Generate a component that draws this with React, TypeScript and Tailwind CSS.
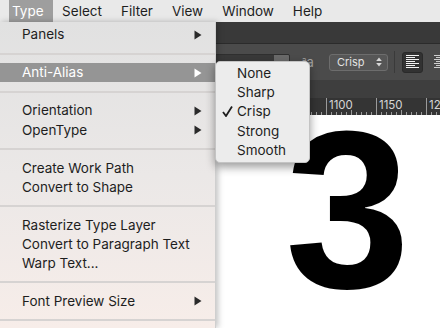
import React from "react";

type Entry = { label: string; arrow?: boolean; active?: boolean } | "sep";

const typeMenu: Entry[] = [
  { label: "Panels", arrow: true },
  "sep",
  { label: "Anti-Alias", arrow: true, active: true },
  "sep",
  { label: "Orientation", arrow: true },
  { label: "OpenType", arrow: true },
  "sep",
  { label: "Create Work Path" },
  { label: "Convert to Shape" },
  "sep",
  { label: "Rasterize Type Layer" },
  { label: "Convert to Paragraph Text" },
  { label: "Warp Text..." },
  "sep",
  { label: "Font Preview Size", arrow: true },
  "sep",
];

const aliasModes = ["None", "Sharp", "Crisp", "Strong", "Smooth"];

const Arrow = ({ light }: { light?: boolean }) => (
  <svg width="8" height="10" viewBox="0 0 8 10" className="ml-auto shrink-0">
    <polygon points="0.5,0.5 7.5,5 0.5,9.5" fill={light ? "#ffffff" : "#2a2a2a"} />
  </svg>
);

const MenuBar = () => {
  const names = ["Type", "Select", "Filter", "View", "Window", "Help"];
  return (
    <div className="flex h-[22px] items-center bg-[#e9e9e9] pl-[9px] text-[13.5px] text-[#1e1e1e]">
      {names.map((n, i) => (
        <div
          key={n}
          className={
            i === 0
              ? "flex h-full shrink-0 items-center bg-[#9e9e9e] pl-[3px] pr-[9px] text-white"
              : "flex h-full shrink-0 items-center px-[9.5px]"
          }
        >
          {n}
        </div>
      ))}
    </div>
  );
};

const AlignIcon = ({ center }: { center?: boolean }) => {
  const widths = [13, 9, 13, 9, 13, 9, 13];
  return (
    <svg width="13" height="14" viewBox="0 0 13 14">
      {widths.map((w, i) => {
        const x = center ? (13 - w) / 2 : 0;
        return (
          <rect
            key={i}
            x={x}
            y={i * 2}
            width={w}
            height="1"
            fill={center ? "#cfcfcf" : "#f2f2f2"}
          />
        );
      })}
    </svg>
  );
};

const Toolbar = () => (
  <div className="flex h-[36px] items-center overflow-hidden bg-[#4b4b4b]">
    <div className="ml-[170px] flex h-[17px] w-[120px] shrink-0 overflow-hidden rounded-[2px] border border-[#2f2f2f] bg-[#393939]">
      <div className="flex-1" />
      <div className="w-[15px] bg-[#6a6a6a]" />
    </div>
    <div className="ml-[12px] flex w-[14px] shrink-0 items-end text-[#a2a2a2]">
      <span className="mb-[5px] text-[8px] leading-none">a</span>
      <span className="text-[13px] leading-none">a</span>
    </div>
    <div className="ml-[13px] flex h-[17px] w-[59px] shrink-0 items-center rounded-[3px] border border-[#6d6d6d] bg-[#565656] pl-[7px] pr-[5px] text-[11px] text-[#e2e2e2]">
      Crisp
      <svg width="6" height="10" viewBox="0 0 6 10" className="ml-auto">
        <polygon points="3,0.5 5.8,4 0.2,4" fill="#d8d8d8" />
        <polygon points="3,9.5 5.8,6 0.2,6" fill="#d8d8d8" />
      </svg>
    </div>
    <div className="ml-[6px] h-[22px] w-px shrink-0 bg-[#3a3a3a]" />
    <div className="ml-[7px] flex h-[21px] w-[21px] shrink-0 items-center justify-center rounded-[3px] border border-[#2a2a2a] bg-[#323232]">
      <AlignIcon />
    </div>
    <div className="ml-[7px] flex h-[21px] w-[21px] shrink-0 items-center justify-center">
      <AlignIcon center />
    </div>
  </div>
);

const Ruler = () => {
  const labels = [800, 850, 900, 950, 1000, 1050, 1100, 1150, 1200];
  return (
    <div className="flex h-[17px] overflow-hidden bg-[#343434] pl-[26px]">
      {labels.map((l) => (
        <div key={l} className="relative h-full w-[50px] shrink-0 border-l border-[#9a9a9a]">
          <span className="absolute left-[2px] top-[1px] text-[11.5px] leading-[13px] text-[#d6d6d6]">
            {l}
          </span>
          <svg width="50" height="17" className="absolute left-[-1px] top-0">
            {Array.from({ length: 10 }).map((_, i) =>
              i === 0 ? null : (
                <line
                  key={i}
                  x1={i * 5 + 0.5}
                  x2={i * 5 + 0.5}
                  y1={i === 5 ? 12 : 14}
                  y2={17}
                  stroke="#9a9a9a"
                  strokeWidth="1"
                />
              )
            )}
          </svg>
        </div>
      ))}
    </div>
  );
};

const Workspace = () => (
  <div className="flex h-[306px] flex-col">
    <div className="h-[22px] border-b border-[#2b2b2b] bg-[#393939]" />
    <Toolbar />
    <div className="h-[18px] bg-[#3e3e3e]" />
    <Ruler />
    <div className="flex flex-1 bg-white pl-[285px]">
      <div className="-mt-[18px] h-[225px] font-['Liberation_Sans',Arial,sans-serif] text-[225px] font-bold leading-none text-black">
        3
      </div>
    </div>
  </div>
);

const TypeMenu = () => (
  <div className="absolute left-0 top-[22px] flex h-[306px] w-[216px] flex-col border-r border-[#cfcfcf] bg-gradient-to-b from-[#e1e1e1] via-[#ebe8e7] to-[#f7ede9] pt-[3px] text-[13.5px] text-[#1e1e1e] shadow-[2px_0_6px_rgba(0,0,0,0.25)]">
    {typeMenu.map((e, i) =>
      e === "sep" ? (
        <div key={i} className="flex h-[18.8px] shrink-0 items-center">
          <div className="h-[2px] w-full bg-[#d6d3d2]" />
        </div>
      ) : (
        <div
          key={i}
          className={
            e.active
              ? "flex h-[19.2px] shrink-0 items-center bg-[#959595] pl-[22px] pr-[13px] text-white"
              : "flex h-[19.2px] shrink-0 items-center pl-[22px] pr-[13px]"
          }
        >
          {e.label}
          {e.arrow && <Arrow light={e.active} />}
        </div>
      )
    )}
  </div>
);

const AntiAliasMenu = () => (
  <div className="absolute left-[215px] top-[61px] w-[95px] rounded-[5px] border border-[#c4c4c4] bg-[#ececec] pb-[3px] pt-[1.5px] text-[13.5px] text-[#1e1e1e] shadow-[0_4px_10px_rgba(0,0,0,0.4)]">
    {aliasModes.map((m) => (
      <div key={m} className="flex h-[19.2px] items-center">
        <div className="flex w-[21px] justify-end pr-[4px]">
          {m === "Crisp" && (
            <svg width="11" height="11" viewBox="0 0 11 11">
              <polyline
                points="1,6 4,10 10,0.5"
                fill="none"
                stroke="#1e1e1e"
                strokeWidth="1.8"
              />
            </svg>
          )}
        </div>
        {m}
      </div>
    ))}
  </div>
);

export default function App() {
  return (
    <div className="relative h-[328px] w-[440px] overflow-hidden bg-white font-[Inter,sans-serif]">
      <MenuBar />
      <Workspace />
      <TypeMenu />
      <AntiAliasMenu />
    </div>
  );
}
